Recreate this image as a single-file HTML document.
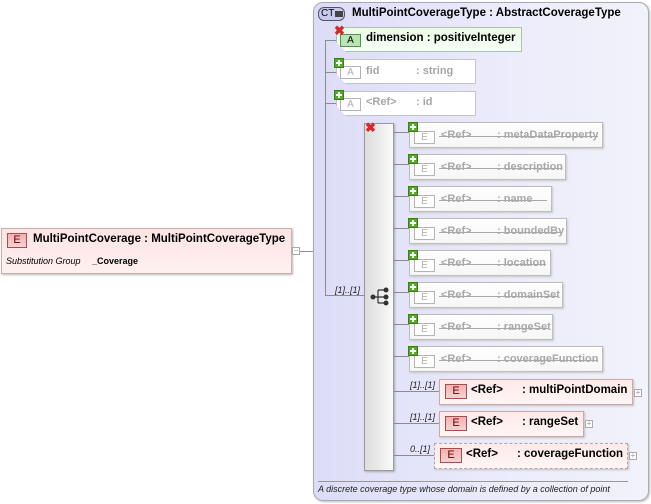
<!DOCTYPE html>
<html><head><meta charset="utf-8"><style>
*{margin:0;padding:0;box-sizing:border-box}
body{width:651px;height:504px;background:#fff;position:relative;overflow:hidden;font-family:"Liberation Sans",sans-serif;font-size:11px;color:#000}
.a{position:absolute}
.ln{position:absolute;background:#8c8c8c}
.el{position:absolute;border:1px solid #bdbdbd;background:linear-gradient(#fff,#f6f6f6);box-shadow:1px 1px 2px #c8c8c8;color:#a8a8a8;font-weight:bold;white-space:nowrap}
.el .t{position:absolute;top:6px;left:31px}
.el .t .c{position:absolute;white-space:nowrap}
.strike{position:absolute;left:29px;right:4px;top:13px;height:1px;background:#a8a8a8}
.eb{position:absolute;left:4px;top:8px;width:21px;height:13px;border:1px solid #b3b3b3;background:#fff;color:#b0b0b0;font-size:10px;font-weight:normal;text-align:center;line-height:11px}
.plus{position:absolute;left:0;top:0;width:10px;height:10px;background:#4fae22;border:1px solid #3b7d14}
.plus:before{content:"";position:absolute;left:1px;top:3px;width:6px;height:2px;background:#fff}
.plus:after{content:"";position:absolute;left:3px;top:1px;width:2px;height:6px;background:#fff}
.x{position:absolute;width:11px;height:11px;color:#d8262a;font-size:13px;font-weight:bold;line-height:10px;text-align:center}
.re{position:absolute;border:1px solid #c9a9a9;background:linear-gradient(#ffe9e9,#fff5f5);box-shadow:1px 1px 2px #c0c0c0;font-weight:bold;font-size:11.5px;white-space:nowrap}
.rb{position:absolute;width:22px;height:15px;border:1px solid #a05050;background:linear-gradient(#f8b0b0,#f4d2d2);color:#600;font-size:11px;text-align:center;line-height:13px;font-weight:normal}
.sq{position:absolute;width:8px;height:8px;border:1px solid #aaa;background:#fff;font-size:8px;line-height:6px;text-align:center;color:#999}
.card{font-style:italic;font-size:9px;position:absolute;color:#222}
</style></head><body>

<!-- left element -->
<div class="a" style="left:1px;top:228px;width:291px;height:46px;border:1px solid #c8b0b0;background:linear-gradient(#fde4e4,#fff0f0);box-shadow:1px 1px 2px #bbb"></div>
<div class="rb" style="left:7px;top:233px;width:20px;">E</div>
<div class="a" style="left:33px;top:233px;font-weight:bold;font-size:11.5px">MultiPointCoverage : MultiPointCoverageType</div>
<div class="ln" style="left:6px;top:253px;width:277px;background:#999"></div>
<div class="a" style="left:6px;top:256px;font-size:9px;font-style:italic">Substitution Group</div>
<div class="a" style="left:92px;top:256px;font-size:9px;font-weight:bold">_Coverage</div>
<div class="sq" style="left:292px;top:247px">−</div>
<div class="ln" style="left:300px;top:251px;width:13px;height:1px"></div>

<!-- CT box -->
<div class="a" style="left:313px;top:2px;width:336px;height:499px;border:1px solid #a9a9b8;border-radius:10px;background:linear-gradient(90deg,#dcdcf8,#ececfb 60%,#f2f2fb);box-shadow:1px 1px 2px #bbb"></div>
<div class="a" style="left:318px;top:7px;width:27px;height:14px;border:1px solid #555;border-radius:6px;background:#c9c9ef"></div>
<div class="a" style="left:321px;top:8px;font-size:10px;line-height:12px">CT</div>
<div class="a" style="left:335px;top:11px;width:8px;height:6px;background:#444"></div>
<div class="a" style="left:352px;top:7px;font-weight:bold;font-size:11.5px">MultiPointCoverageType : AbstractCoverageType</div>

<!-- tree lines -->
<div class="ln" style="left:325px;top:40px;width:1px;height:256px"></div>
<div class="ln" style="left:325px;top:40px;width:11px;height:1px"></div>
<div class="ln" style="left:325px;top:72px;width:11px;height:1px"></div>
<div class="ln" style="left:325px;top:103px;width:11px;height:1px"></div>
<div class="ln" style="left:325px;top:295px;width:39px;height:1px"></div>
<div class="card" style="left:335px;top:285px">[1]..[1]</div>

<!-- attributes -->
<div class="a" style="left:336px;top:27px;width:186px;height:25px;border:1px solid #b0c0b0;background:linear-gradient(#eafbe6,#f6fff4);box-shadow:1px 1px 2px #bbb;clip-path:polygon(0 0,100% 0,100% 100%,10px 100%,0 15px)"></div>
<div class="a" style="left:340px;top:34px;width:21px;height:13px;border:1px solid #5f8a5f;background:#b8e6b0;font-size:10px;text-align:center;line-height:11px">A</div>
<div class="x" style="left:334px;top:26px">✖</div>
<div class="a" style="left:366px;top:32px;font-weight:bold;font-size:11.5px">dimension : positiveInteger</div>

<div class="a" style="left:336px;top:59px;width:140px;height:25px;border:1px solid #c4c4c4;background:#fff;box-shadow:1px 1px 2px #ccc;clip-path:polygon(0 0,100% 0,100% 100%,10px 100%,0 15px)"></div>
<div class="eb" style="left:340px;top:66px">A</div>
<div class="plus" style="left:334px;top:58px"></div>
<div class="a" style="left:366px;top:65px;color:#a6a6a6;font-weight:bold">fid</div>
<div class="a" style="left:416px;top:65px;color:#a6a6a6;font-weight:bold">: string</div>

<div class="a" style="left:336px;top:91px;width:140px;height:25px;border:1px solid #c4c4c4;background:#fff;box-shadow:1px 1px 2px #ccc;clip-path:polygon(0 0,100% 0,100% 100%,10px 100%,0 15px)"></div>
<div class="eb" style="left:340px;top:98px">A</div>
<div class="plus" style="left:334px;top:90px"></div>
<div class="a" style="left:366px;top:96px;color:#a6a6a6;font-weight:bold">&lt;Ref&gt;</div>
<div class="a" style="left:416px;top:96px;color:#a6a6a6;font-weight:bold">: id</div>

<!-- sequence bar -->
<div class="a" style="left:364px;top:123px;width:30px;height:348px;border:1px solid #9a9a9a;background:linear-gradient(90deg,#dcdcdc,#fafafa);box-shadow:1px 1px 2px #aaa"></div>
<div class="x" style="left:365px;top:123px">✖</div>
<svg class="a" style="left:368px;top:286px" width="22" height="22" viewBox="0 0 22 22">
<g fill="#333" stroke="#333"><circle cx="5" cy="11" r="2"/><circle cx="18" cy="4" r="2"/><circle cx="18" cy="11" r="2"/><circle cx="18" cy="17" r="2"/>
<path d="M5 11H10M10 4V17M10 4H18M10 11H18M10 17H18" fill="none" stroke-width="1.2"/></g></svg>

<!-- optional (grey) children -->
<div class="ln" style="left:394px;top:132px;width:15px;height:1px"></div>
<div class="el" style="left:409px;top:122px;width:194px;height:26px"><div class="eb">E</div><div class="strike"></div><div class="t"><span class="c" style="left:0">&lt;Ref&gt;</span><span class="c" style="left:56px">: metaDataProperty</span></div></div>
<div class="plus" style="left:408px;top:122px"></div>

<div class="ln" style="left:394px;top:164px;width:15px;height:1px"></div>
<div class="el" style="left:409px;top:154px;width:157px;height:26px"><div class="eb">E</div><div class="strike"></div><div class="t"><span class="c" style="left:0">&lt;Ref&gt;</span><span class="c" style="left:56px">: description</span></div></div>
<div class="plus" style="left:408px;top:154px"></div>

<div class="ln" style="left:394px;top:196px;width:15px;height:1px"></div>
<div class="el" style="left:409px;top:186px;width:143px;height:26px"><div class="eb">E</div><div class="strike"></div><div class="t"><span class="c" style="left:0">&lt;Ref&gt;</span><span class="c" style="left:56px">: name</span></div></div>
<div class="plus" style="left:408px;top:186px"></div>

<div class="ln" style="left:394px;top:228px;width:15px;height:1px"></div>
<div class="el" style="left:409px;top:218px;width:158px;height:26px"><div class="eb">E</div><div class="strike"></div><div class="t"><span class="c" style="left:0">&lt;Ref&gt;</span><span class="c" style="left:56px">: boundedBy</span></div></div>
<div class="plus" style="left:408px;top:218px"></div>

<div class="ln" style="left:394px;top:260px;width:15px;height:1px"></div>
<div class="el" style="left:409px;top:250px;width:142px;height:26px"><div class="eb">E</div><div class="strike"></div><div class="t"><span class="c" style="left:0">&lt;Ref&gt;</span><span class="c" style="left:56px">: location</span></div></div>
<div class="plus" style="left:408px;top:250px"></div>

<div class="ln" style="left:394px;top:292px;width:15px;height:1px"></div>
<div class="el" style="left:409px;top:282px;width:154px;height:26px"><div class="eb">E</div><div class="strike"></div><div class="t"><span class="c" style="left:0">&lt;Ref&gt;</span><span class="c" style="left:56px">: domainSet</span></div></div>
<div class="plus" style="left:408px;top:282px"></div>

<div class="ln" style="left:394px;top:324px;width:15px;height:1px"></div>
<div class="el" style="left:409px;top:314px;width:144px;height:26px"><div class="eb">E</div><div class="strike"></div><div class="t"><span class="c" style="left:0">&lt;Ref&gt;</span><span class="c" style="left:56px">: rangeSet</span></div></div>
<div class="plus" style="left:408px;top:314px"></div>

<div class="ln" style="left:394px;top:356px;width:15px;height:1px"></div>
<div class="el" style="left:409px;top:346px;width:194px;height:26px"><div class="eb">E</div><div class="strike"></div><div class="t"><span class="c" style="left:0">&lt;Ref&gt;</span><span class="c" style="left:56px">: coverageFunction</span></div></div>
<div class="plus" style="left:408px;top:346px"></div>

<!-- required children -->
<div class="ln" style="left:394px;top:391px;width:45px;height:1px"></div>
<div class="card" style="left:410px;top:380px">[1]..[1]</div>
<div class="re" style="left:439px;top:379px;width:194px;height:26px"></div>
<div class="rb" style="left:445px;top:384px">E</div>
<div class="a" style="left:471px;top:384px;font-weight:bold;font-size:11.5px">&lt;Ref&gt;</div>
<div class="a" style="left:522px;top:384px;font-weight:bold;font-size:11.5px">: multiPointDomain</div>
<div class="sq" style="left:634px;top:389px">+</div>

<div class="ln" style="left:394px;top:423px;width:45px;height:1px"></div>
<div class="card" style="left:410px;top:412px">[1]..[1]</div>
<div class="re" style="left:439px;top:411px;width:145px;height:26px"></div>
<div class="rb" style="left:445px;top:416px">E</div>
<div class="a" style="left:471px;top:416px;font-weight:bold;font-size:11.5px">&lt;Ref&gt;</div>
<div class="a" style="left:522px;top:416px;font-weight:bold;font-size:11.5px">: rangeSet</div>
<div class="sq" style="left:585px;top:420px">+</div>

<div class="ln" style="left:394px;top:455px;width:40px;height:1px"></div>
<div class="card" style="left:410px;top:444px">0..[1]</div>
<div class="re" style="left:434px;top:443px;width:194px;height:26px;border:1px dashed #aaa"></div>
<div class="rb" style="left:440px;top:448px">E</div>
<div class="a" style="left:466px;top:448px;font-weight:bold;font-size:11.5px">&lt;Ref&gt;</div>
<div class="a" style="left:517px;top:448px;font-weight:bold;font-size:11.5px">: coverageFunction</div>
<div class="sq" style="left:629px;top:452px">+</div>

<!-- footer -->
<div class="ln" style="left:318px;top:481px;width:310px;height:1px;background:#999"></div>
<div class="a" style="left:318px;top:484px;font-size:9px;font-style:italic;color:#222">A discrete coverage type whose domain is defined by a collection of point</div>
</body></html>
